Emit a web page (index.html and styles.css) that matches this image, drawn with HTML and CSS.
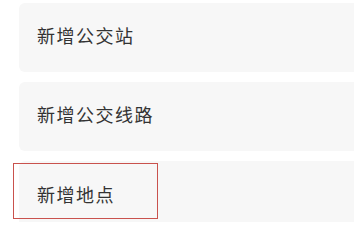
FILE: index.html
```html
<!DOCTYPE html>
<html lang="zh">
<head>
<meta charset="utf-8">
<link rel="stylesheet" href="styles.css">
</head>
<body>
<div class="list">
  <div class="card"><span class="label">新增公交站</span></div>
  <div class="card"><span class="label">新增公交线路</span></div>
  <div class="card selected"><span class="label">新增地点</span><div class="highlight"></div></div>
</div>
</body>
</html>
```
FILE: styles.css
```css
html, body {
  margin: 0;
  padding: 0;
  background: #ffffff;
  width: 354px;
  height: 222px;
  overflow: hidden;
}
.list {
  display: flex;
  flex-direction: column;
  gap: 10px;
  padding: 3px 0 0 19px;
}
.card {
  position: relative;
  height: 69px;
  background: #f7f7f7;
  border-radius: 6px 0 0 6px;
  display: flex;
  align-items: center;
  padding-left: 18px;
  box-sizing: border-box;
}
.label {
  font-family: "Noto Sans CJK SC", "Noto Sans", sans-serif;
  font-size: 18px;
  font-weight: 400;
  letter-spacing: 1.5px;
  color: #333333;
  margin-top: -6px;
}
.selected .label {
  margin-top: -3px;
}
.highlight {
  position: absolute;
  left: -6px;
  top: 2px;
  width: 145px;
  height: 56px;
  border: 1px solid #c9524d;
  box-sizing: border-box;
}
```
